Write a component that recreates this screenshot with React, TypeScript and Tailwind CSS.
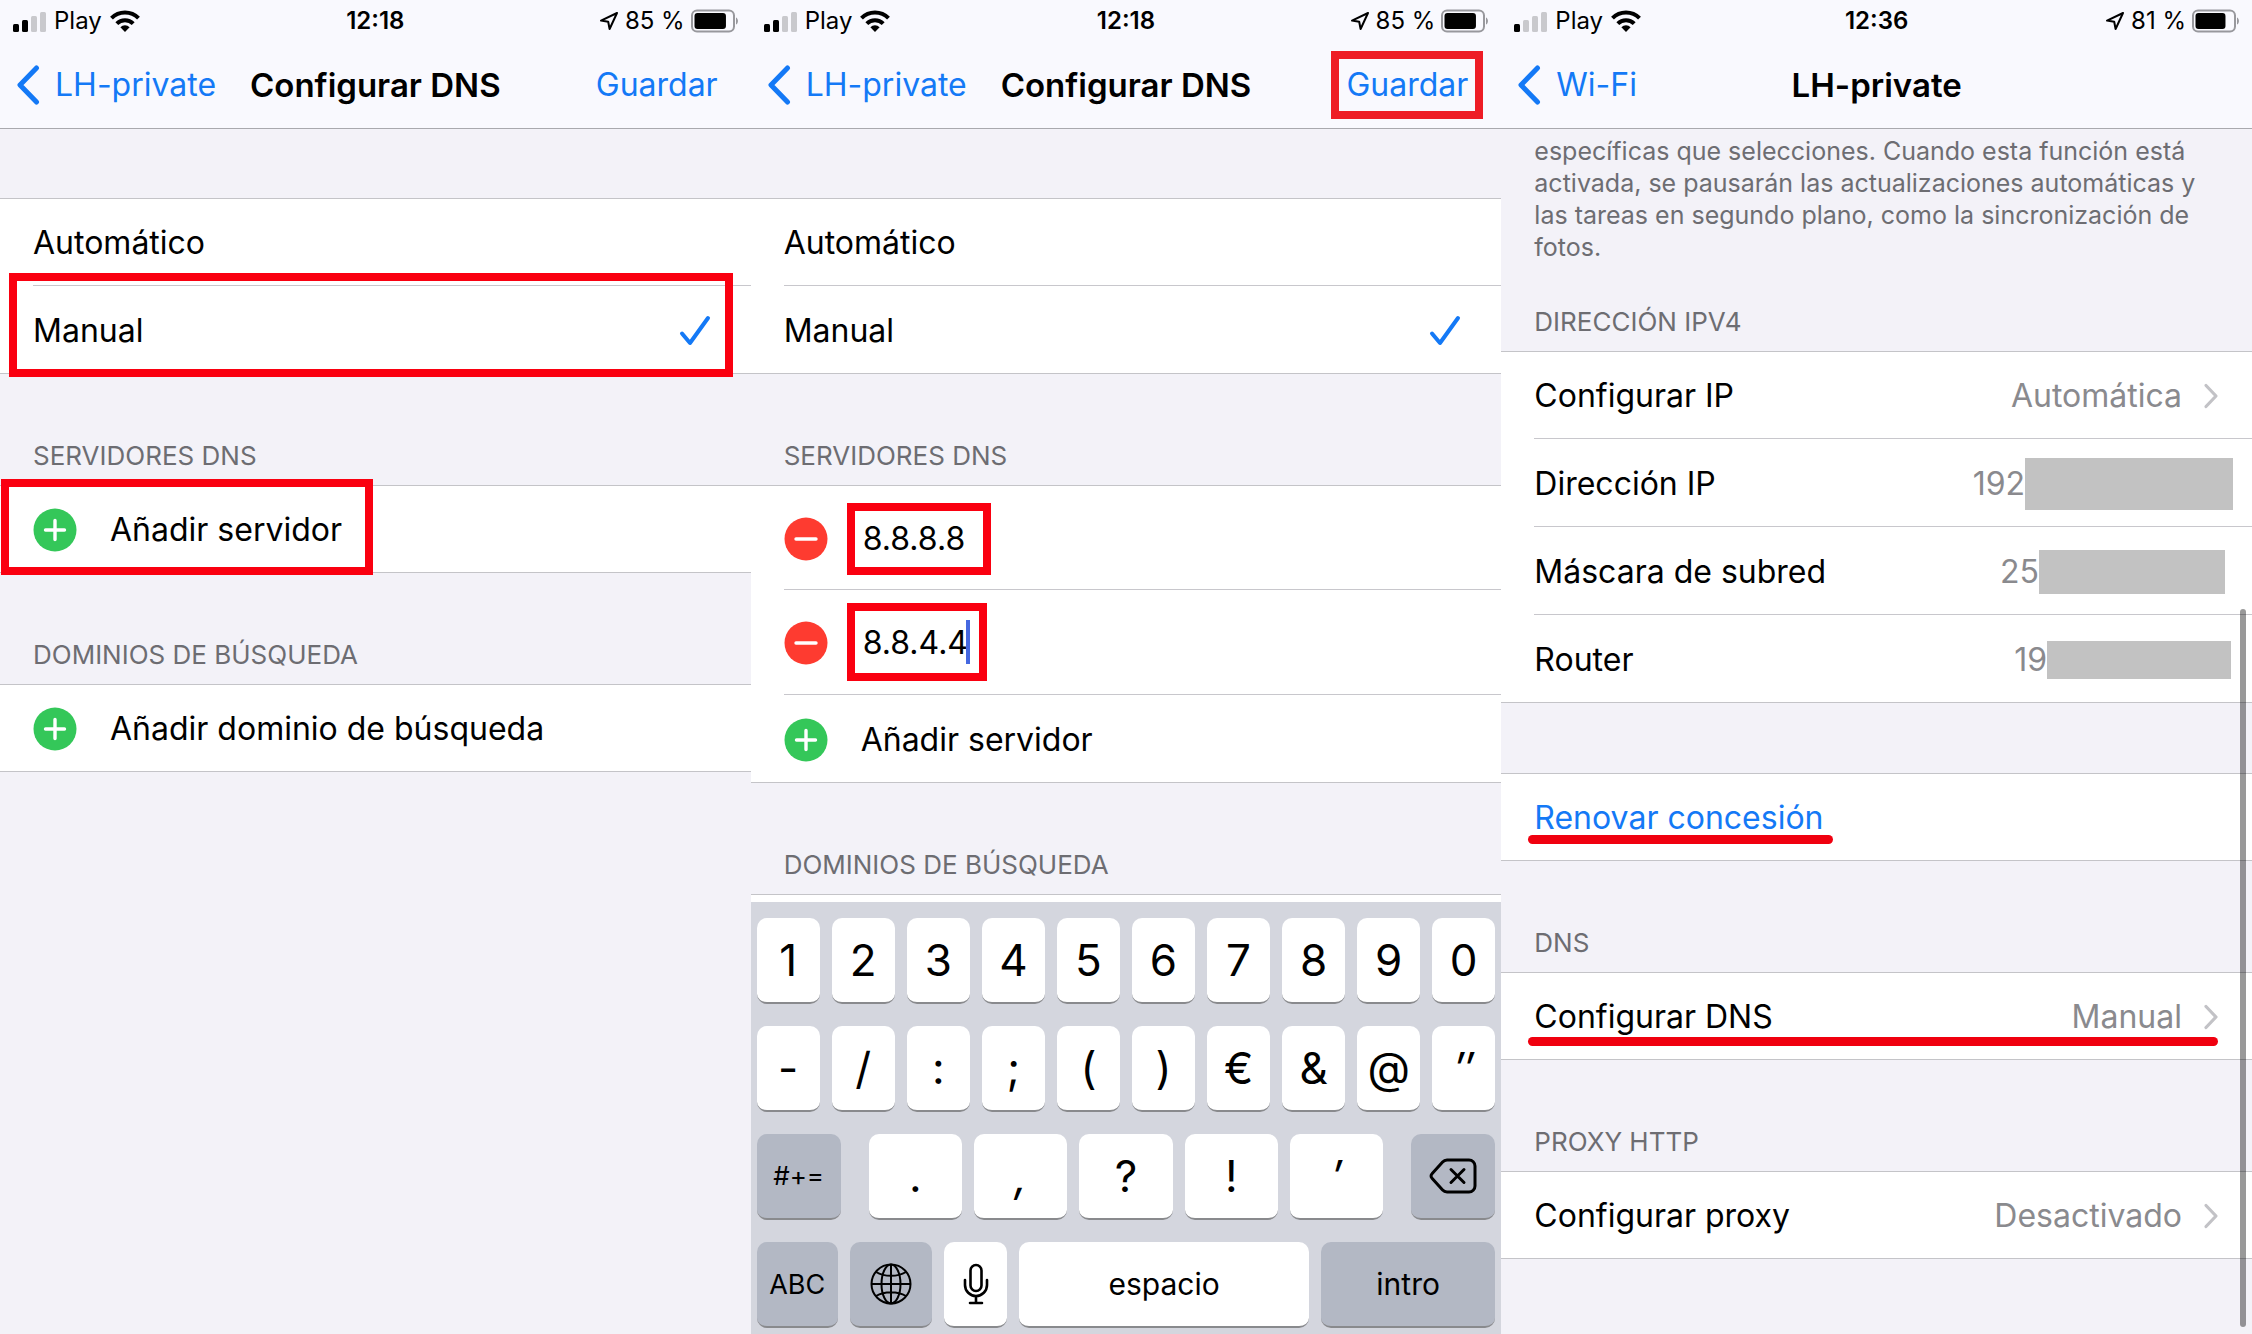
import React from "react";

interface StatusBarProps {
  time: string;
  battery: number;
  signal: number;
}

const StatusBar: React.FC<StatusBarProps> = ({ time, battery, signal }) => (
  <div className="grid h-[41px] grid-cols-[1fr_auto_1fr] items-center px-3 text-[24px] leading-none">
    <div className="flex items-center gap-2">
      <svg viewBox="0 0 34 22" className="h-[22px] w-[34px]">
        {[0, 1, 2, 3].map((i) => (
          <rect
            key={i}
            x={1 + i * 9}
            y={14 - i * 4}
            width="6"
            height={8 + i * 4}
            rx="1.5"
            fill={i < signal ? "#000" : "#c9c9cd"}
          />
        ))}
      </svg>
      <span>Play</span>
      <svg viewBox="0 0 30 22" className="h-[22px] w-[30px]">
        <g fill="none" stroke="#000" strokeWidth="4">
          <path d="M1.5 8.2a19 19 0 0 1 27 0" />
          <path d="M6.8 13.6a11.5 11.5 0 0 1 16.4 0" />
        </g>
        <path d="M15 22l-4.6-4.8a6.6 6.6 0 0 1 9.2 0z" />
      </svg>
    </div>
    <span className="font-semibold">{time}</span>
    <div className="flex items-center justify-end gap-[6px]">
      <svg viewBox="0 0 20 20" className="size-5">
        <path
          d="M18 2L2 9.6l7.2 1.2L10.6 18z"
          fill="none"
          stroke="#000"
          strokeWidth="2"
          strokeLinejoin="round"
        />
      </svg>
      <span>{battery} %</span>
      <svg viewBox="0 0 48 24" className="h-6 w-12">
        <rect x="1" y="1.5" width="42" height="21" rx="5" fill="none" stroke="#98989d" strokeWidth="2" />
        <rect x="3.5" y="4" width={battery * 0.37} height="16" rx="3" />
        <path d="M45 8.5c2.6 1 2.6 6 0 7z" fill="#98989d" />
      </svg>
    </div>
  </div>
);

interface HeaderProps extends StatusBarProps {
  back: string;
  title: string;
  action?: React.ReactNode;
}

const Header: React.FC<HeaderProps> = ({ back, title, action, ...status }) => (
  <header className="h-[129px] shrink-0 border-b border-[#a9a9ae] bg-[#f9f9fe]">
    <StatusBar {...status} />
    <div className="grid h-[87px] grid-cols-[1fr_auto_1fr] items-center">
      <a href="#" className="flex items-center gap-[15px] pl-4 text-[#1479f6]">
        <svg viewBox="0 0 24 40" className="h-10 w-6">
          <path
            d="M20.5 3L4 20l16.5 17"
            fill="none"
            stroke="currentColor"
            strokeWidth="5"
            strokeLinecap="round"
            strokeLinejoin="round"
          />
        </svg>
        {back}
      </a>
      <h1 className="text-[33px] font-semibold">{title}</h1>
      <div className="flex justify-end pr-[33px]">{action}</div>
    </div>
  </header>
);

const Screen: React.FC<{ children: React.ReactNode }> = ({ children }) => (
  <section className="relative flex min-w-0 flex-col overflow-hidden bg-[#f3f2f8]">
    {children}
  </section>
);

const GroupTitle: React.FC<{ children: React.ReactNode }> = ({ children }) => (
  <h2 className="flex h-[111px] shrink-0 items-end px-[33px] pb-[13px] text-[26px] leading-8 text-[#6d6d72]">
    {children}
  </h2>
);

const Group: React.FC<{ children: React.ReactNode }> = ({ children }) => (
  <ul className="shrink-0 bg-white">{children}</ul>
);

// Separators start at the text inset, the outer edges of a group run full width
const Row: React.FC<{ tall?: boolean; children: React.ReactNode }> = ({
  tall,
  children,
}) => (
  <li
    className={`group relative border-[#c4c4c8] pl-[33px] first:border-t last:border-b ${
      tall ? "h-[105px]" : "h-22"
    }`}
  >
    <div className="flex h-full items-center border-b border-[#c8c7cc] pt-[2px] group-last:border-b-0">
      {children}
    </div>
  </li>
);

const Option: React.FC<{ name: string; label: string; checked?: boolean }> = ({
  name,
  label,
  checked,
}) => (
  <label className="flex h-full flex-1 items-center justify-between pr-10">
    {label}
    <input
      type="radio"
      name={name}
      defaultChecked={checked}
      className="peer absolute size-0 appearance-none"
    />
    <svg viewBox="0 0 32 32" className="hidden size-8 peer-checked:block">
      <path
        d="M3 18.5l8 9.5L29 3"
        fill="none"
        stroke="#1479f6"
        strokeWidth="4"
        strokeLinecap="round"
        strokeLinejoin="round"
      />
    </svg>
  </label>
);

const RoundIcon: React.FC<{ minus?: boolean }> = ({ minus }) => (
  <svg viewBox="0 0 44 44" className="size-11 shrink-0">
    <circle cx="22" cy="22" r="21.5" fill={minus ? "#fe3b30" : "#34c759"} />
    <path
      d={minus ? "M12 22h20" : "M12.5 22h19M22 12.5v19"}
      stroke="#fff"
      strokeWidth="3.4"
      strokeLinecap="round"
    />
  </svg>
);

const AddButton: React.FC<{ children: React.ReactNode }> = ({ children }) => (
  <button type="button" className="flex h-full flex-1 items-center gap-[33px] text-left">
    <RoundIcon />
    {children}
  </button>
);

const Disclosure: React.FC<{ label: string; value: string }> = ({
  label,
  value,
}) => (
  <a href="#" className="flex h-full flex-1 items-center pr-[33px]">
    <span className="flex-1">{label}</span>
    <span className="text-[#8a8a8e]">{value}</span>
    <svg viewBox="0 0 16 26" className="ml-[21px] h-[26px] w-4">
      <path
        d="M3 2.5L13 13 3 23.5"
        fill="none"
        stroke="#c2c2c6"
        strokeWidth="3.2"
        strokeLinecap="round"
        strokeLinejoin="round"
      />
    </svg>
  </a>
);

const Mark: React.FC<{ className: string }> = ({ className }) => (
  <div className={`pointer-events-none absolute z-10 ${className}`} />
);

const keyBase =
  "flex h-[86px] min-w-0 items-center justify-center rounded-[10px] border-b-2 border-[#898a8d]";

const Key: React.FC<{
  size: string;
  dark?: boolean;
  label?: string;
  children: React.ReactNode;
}> = ({ size, dark, label, children }) => (
  <button
    type="button"
    aria-label={label}
    className={`${keyBase} ${size} ${dark ? "bg-[#b3b8c4]" : "bg-white"}`}
  >
    {children}
  </button>
);

const Keyboard: React.FC = () => (
  <div className="mt-auto flex shrink-0 flex-col gap-[22px] bg-[#d4d6de] px-[6px] pb-[6px] pt-4 text-[44px] leading-none">
    {["1234567890", "-/:;()€&@″"].map((row) => (
      <div key={row} className="flex gap-3">
        {row.split("").map((k) => (
          <Key key={k} size="flex-1">
            {k === "″" ? <i>{k}</i> : k}
          </Key>
        ))}
      </div>
    ))}
    <div className="flex gap-[28px]">
      <Key size="flex-[84]" dark>
        <span className="text-[26px]">#+=</span>
      </Key>
      <div className="flex flex-[515] gap-3">
        {[".", ",", "?", "!", "′"].map((k) => (
          <Key key={k} size="flex-1">
            {k === "′" || k === "," ? <i>{k}</i> : k}
          </Key>
        ))}
      </div>
      <Key size="flex-[84]" dark label="Borrar">
        <svg viewBox="0 0 48 36" className="h-9 w-12" fill="none" stroke="#000" strokeWidth="3">
          <path
            d="M18 2h22a6 6 0 0 1 6 6v20a6 6 0 0 1-6 6H18a6 6 0 0 1-4.4-2L3 20.2a3 3 0 0 1 0-4.4L13.6 4A6 6 0 0 1 18 2z"
            strokeLinejoin="round"
          />
          <path d="M22 11.5l13 13M35 11.5l-13 13" strokeLinecap="round" />
        </svg>
      </Key>
    </div>
    <div className="flex gap-3 text-[30px]">
      <Key size="flex-[81]" dark>
        <span className="text-[27px]">ABC</span>
      </Key>
      <Key size="flex-[82]" dark label="Idioma">
        <svg viewBox="0 0 42 42" className="size-[42px]" fill="none" stroke="#000" strokeWidth="2">
          <circle cx="21" cy="21" r="19.5" />
          <ellipse cx="21" cy="21" rx="9.5" ry="19.5" />
          <path d="M21 1.5v39M1.5 21h39M6 9c8.5 5 21.5 5 30 0M6 33c8.5-5 21.5-5 30 0" />
        </svg>
      </Key>
      <Key size="flex-[63]" label="Dictar">
        <svg viewBox="0 0 26 42" className="h-[42px] w-[26px]" fill="none" stroke="#000" strokeWidth="2.6">
          <rect x="7.5" y="2" width="11" height="26" rx="5.5" />
          <path d="M2 17v5a11 11 0 0 0 22 0v-5M13 33v7M7 40h12" strokeLinecap="round" />
        </svg>
      </Key>
      <Key size="flex-[289]">espacio</Key>
      <Key size="flex-[174]" dark>
        intro
      </Key>
    </div>
  </div>
);

const ServerInput: React.FC<{ label: string; value: string }> = ({
  label,
  value,
}) => (
  <>
    <button type="button" aria-label={`Eliminar ${value}`}>
      <RoundIcon minus />
    </button>
    <input
      type="text"
      aria-label={label}
      defaultValue={value}
      className="ml-[35px] min-w-0 flex-1 bg-transparent outline-none"
    />
  </>
);

const Masked: React.FC<{ label: string; value: string; bar: string }> = ({
  label,
  value,
  bar,
}) => (
  <>
    <span className="flex-1">{label}</span>
    <span className="text-[#8a8a8e]">{value}</span>
    <span className={`bg-[#c2c2c2] ${bar}`} />
  </>
);

const save = (
  <button type="button" className="text-[#1479f6]">
    Guardar
  </button>
);

const App: React.FC = () => (
  <main className="grid min-h-screen grid-cols-3 bg-[#f3f2f8] font-['Inter','Liberation_Sans',sans-serif] text-[32px] leading-10 text-black">
    <Screen>
      <Header time="12:18" battery={85} signal={2} back="LH-private" title="Configurar DNS" action={save} />
      <div className="h-[69px] shrink-0" />
      <Group>
        <Row>
          <Option name="mode-a" label="Automático" />
        </Row>
        <Row>
          <Option name="mode-a" label="Manual" checked />
          <Mark className="-bottom-1 -top-[13px] left-[9px] right-[18px] border-8 border-[#fa0010]" />
        </Row>
      </Group>
      <GroupTitle>SERVIDORES DNS</GroupTitle>
      <Group>
        <Row>
          <AddButton>Añadir servidor</AddButton>
          <Mark className="-bottom-[3px] -top-[7px] left-px w-[372px] border-8 border-[#fa0010]" />
        </Row>
      </Group>
      <GroupTitle>DOMINIOS DE BÚSQUEDA</GroupTitle>
      <Group>
        <Row>
          <AddButton>Añadir dominio de búsqueda</AddButton>
        </Row>
      </Group>
    </Screen>

    <Screen>
      <Header
        time="12:18"
        battery={85}
        signal={2}
        back="LH-private"
        title="Configurar DNS"
        action={
          <div className="relative">
            {save}
            <Mark className="-inset-x-[15px] -inset-y-[14px] border-8 border-[#ee1c25]" />
          </div>
        }
      />
      <div className="h-[69px] shrink-0" />
      <Group>
        <Row>
          <Option name="mode-b" label="Automático" />
        </Row>
        <Row>
          <Option name="mode-b" label="Manual" checked />
        </Row>
      </Group>
      <GroupTitle>SERVIDORES DNS</GroupTitle>
      <Group>
        <Row tall>
          <ServerInput label="Servidor 1" value="8.8.8.8" />
          <Mark className="left-24 top-[17px] h-[72px] w-36 border-8 border-[#fa0010]" />
        </Row>
        <Row tall>
          <ServerInput label="Servidor 2" value="8.8.4.4" />
          <Mark className="left-24 top-[13px] h-[78px] w-[140px] border-8 border-[#fa0010]" />
          <Mark className="left-[215px] top-[30px] h-11 w-1 bg-[#4568e0]" />
        </Row>
        <Row>
          <AddButton>Añadir servidor</AddButton>
        </Row>
      </Group>
      <GroupTitle>DOMINIOS DE BÚSQUEDA</GroupTitle>
      <div className="h-2 shrink-0 border-t border-[#c4c4c8] bg-white" />
      <Keyboard />
    </Screen>

    <Screen>
      <Header time="12:36" battery={81} signal={1} back="Wi-Fi" title="LH-private" />
      <p className="shrink-0 px-[33px] pt-[6px] text-[25px] leading-8 text-[#6d6d72]">
        específicas que selecciones. Cuando esta función está activada, se
        pausarán las actualizaciones automáticas y las tareas en segundo plano,
        como la sincronización de fotos.
      </p>
      <h2 className="flex h-[88px] shrink-0 items-end px-[33px] pb-[13px] text-[26px] leading-8 text-[#6d6d72]">
        DIRECCIÓN IPV4
      </h2>
      <Group>
        <Row>
          <Disclosure label="Configurar IP" value="Automática" />
        </Row>
        <Row>
          <Masked label="Dirección IP" value="192" bar="mr-[19px] h-[52px] w-[208px]" />
        </Row>
        <Row>
          <Masked label="Máscara de subred" value="25" bar="mr-[27px] h-11 w-[186px]" />
        </Row>
        <Row>
          <Masked label="Router" value="19" bar="mr-[21px] h-[38px] w-[184px]" />
        </Row>
      </Group>
      <div className="h-[70px] shrink-0" />
      <Group>
        <Row>
          <button type="button" className="text-[#1479f6]">
            Renovar concesión
          </button>
          <Mark className="bottom-4 left-[27px] h-[9px] w-[305px] rounded-full bg-[#f0000f]" />
        </Row>
      </Group>
      <GroupTitle>DNS</GroupTitle>
      <Group>
        <Row>
          <Disclosure label="Configurar DNS" value="Manual" />
          <Mark className="bottom-[13px] left-[27px] right-[34px] h-[9px] rounded-full bg-[#f0000f]" />
        </Row>
      </Group>
      <GroupTitle>PROXY HTTP</GroupTitle>
      <Group>
        <Row>
          <Disclosure label="Configurar proxy" value="Desactivado" />
        </Row>
      </Group>
      <Mark className="bottom-[7px] right-[6px] top-[609px] w-[6px] rounded-full bg-black/40" />
    </Screen>
  </main>
);

export default App;
